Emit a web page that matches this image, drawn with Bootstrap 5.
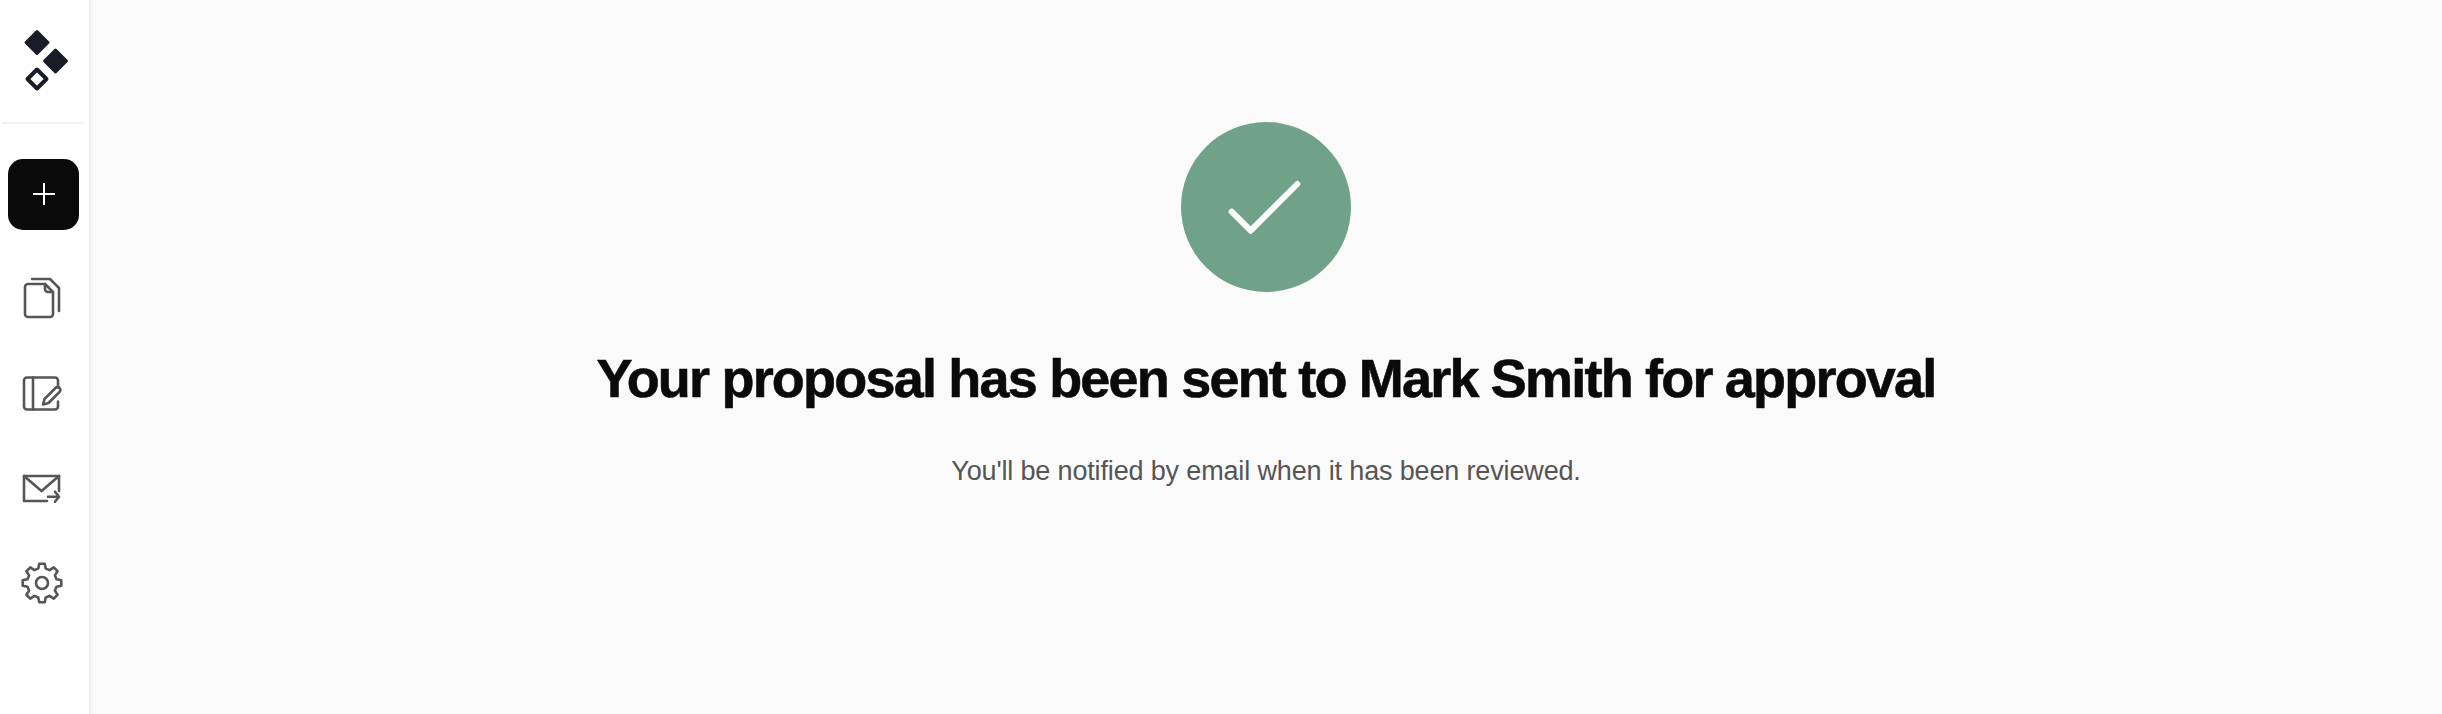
<!DOCTYPE html>
<html lang="en">
<head>
    <meta charset="UTF-8" />
    <title>Proposal sent</title>
    <meta name="viewport" content="width=device-width, initial-scale=1.0" />

    <link href="https://cdn.jsdelivr.net/npm/bootstrap@5.3.0/dist/css/bootstrap.min.css" rel="stylesheet">

    <style>
        html, body {
            height: 100%;
        }

        body {
            background-color: #fafafa;
            font-family: "Liberation Sans", Arial, sans-serif;
            overflow: hidden;
        }

        .side-rail {
            width: 91px;
            background-color: #fff;
            border-right: 2px solid #ececec;
        }

        .rail-logo {
            width: 81px;
            height: 124px;
            margin-left: 2px;
            border-bottom: 2px solid #f0f0f0;
        }

        .rail-add {
            width: 71px;
            height: 71px;
            margin: 35px 0 0 8px;
            padding: 0 0 1px;
            background-color: #0a0a0a;
            border: 0;
            border-radius: 15px;
        }

        .rail-links {
            margin: 44px 0 0 18px;
            gap: 47px;
        }

        .rail-links svg {
            display: block;
            fill: none;
            stroke: #565656;
            stroke-width: 2.6;
            stroke-linecap: round;
            stroke-linejoin: round;
        }

        .done-wrap {
            padding: 122px 1px 0 0;
        }

        .done-circle {
            width: 170px;
            height: 170px;
            background-color: #70a189;
        }

        .done-title {
            margin: 55px 0 0;
            font-size: 54px;
            font-weight: 700;
            line-height: 62px;
            letter-spacing: -1.8px;
            -webkit-text-stroke: 0.6px #0a0a0a;
            color: #0a0a0a;
        }

        .done-note {
            margin: 45px 0 0;
            font-size: 27px;
            line-height: 34px;
            letter-spacing: -0.15px;
            color: #555;
        }
    </style>
</head>
<body>

<div class="d-flex h-100">
    <!-- Sidebar -->
    <nav class="side-rail flex-shrink-0">
        <div class="rail-logo">
            <svg width="81" height="122" viewBox="2 0 81 122">
                <path d="M37 31.500l11 11-11 11-11-11z" fill="#1a1c28" stroke="#1a1c28" stroke-width="3" stroke-linejoin="round"/>
                <path d="M55.500 50l11 11-11 11-11-11z" fill="#1a1c28" stroke="#1a1c28" stroke-width="3" stroke-linejoin="round"/>
                <path d="M37 69.500L46.500 79 37 88.500 27.500 79z" fill="none" stroke="#1a1c28" stroke-width="4" stroke-linejoin="round"/>
            </svg>
        </div>

        <button type="button" class="rail-add d-flex align-items-center justify-content-center" aria-label="New">
            <svg width="24" height="24" viewBox="0 0 24 24">
                <path d="M12 1v22M1 12h22" stroke="#fff" stroke-width="2"/>
            </svg>
        </button>

        <div class="rail-links d-flex flex-column">
            <svg width="48" height="48" viewBox="0 0 48 48">
                <path d="M27 10H10a3 3 0 0 0-3 3v27a3 3 0 0 0 3 3h22a3 3 0 0 0 3-3V18z"/>
                <path d="M27 10v5a3 3 0 0 0 3 3h5"/>
                <path d="M14 5h18l9 9v23"/>
            </svg>
            <svg width="48" height="48" viewBox="0 0 48 48">
                <path d="M40 18v-6.500a3 3 0 0 0-3-3H9a3 3 0 0 0-3 3v26a3 3 0 0 0 3 3h28a3 3 0 0 0 3-3v-5"/>
                <path d="M15 8.500v32"/>
                <path d="M26.500 30l11-11a2.800 2.800 0 0 1 4 4l-11 11-5.500 1.500z"/>
            </svg>
            <svg width="48" height="48" viewBox="0 0 48 48">
                <path d="M29 37H6V12h35v15"/>
                <path d="M6 12l17.500 15L41 12"/>
                <path d="M30 32.700h11M37 27.700l4 5-4 5"/>
            </svg>
            <svg width="48" height="48" viewBox="0 0 48 48">
                <path d="M21.290 4.690L26.710 4.690L27.750 9.480L31.610 11.080L35.740 8.420L39.580 12.260L36.920 16.390L38.520 20.250L43.310 21.290L43.310 26.710L38.520 27.750L36.920 31.610L39.580 35.740L35.740 39.580L31.610 36.920L27.750 38.520L26.710 43.310L21.290 43.310L20.250 38.520L16.390 36.920L12.260 39.580L8.420 35.740L11.080 31.610L9.480 27.750L4.690 26.710L4.690 21.290L9.480 20.250L11.080 16.390L8.420 12.260L12.260 8.420L16.390 11.080L20.250 9.480z"/>
                <circle cx="24" cy="24" r="6"/>
            </svg>
        </div>
    </nav>

    <!-- Main Content -->
    <main class="done-wrap flex-grow-1 d-flex flex-column align-items-center text-center">
        <div class="done-circle rounded-circle">
            <svg width="170" height="170" viewBox="0 0 170 170">
                <path d="M50.700 89.700l19 19L116.300 62" fill="none" stroke="#fff" stroke-width="6" stroke-linecap="round" stroke-linejoin="round"/>
            </svg>
        </div>
        <h1 class="done-title">Your proposal has been sent to Mark Smith for approval</h1>
        <p class="done-note">You'll be notified by email when it has been reviewed.</p>
    </main>
</div>

</body>
</html>
